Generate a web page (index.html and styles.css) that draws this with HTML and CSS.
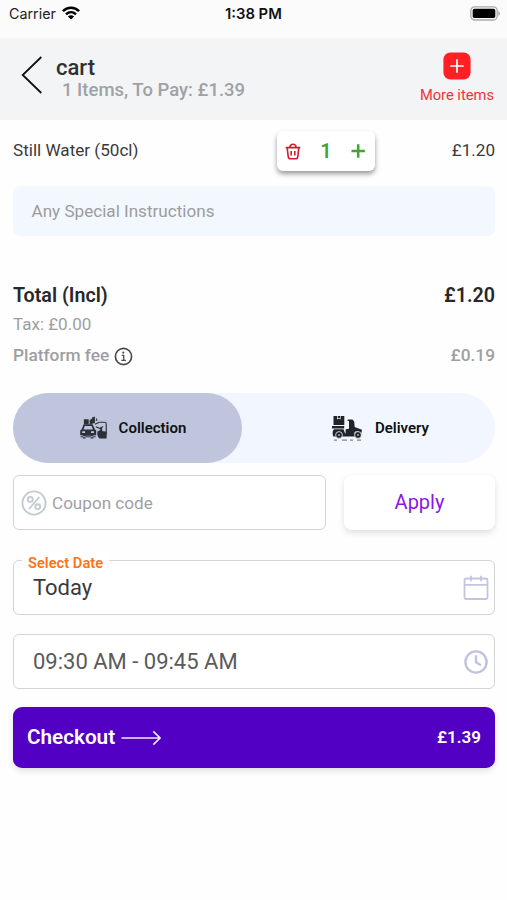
FILE: index.html
```html
<!DOCTYPE html>
<html lang="en">
<head>
<meta charset="utf-8">
<title>Cart</title>
<link rel="stylesheet" href="styles.css">
</head>
<body>
<div class="status">
  <div class="carrier"><span>Carrier</span>
    <svg width="18" height="14" viewBox="0 0 18 14" fill="none" stroke="#000" stroke-width="2.5"><path d="M.9 5.2C5.4.6 12.6.6 17.1 5.2M4 8.3c2.9-2.8 7.1-2.8 10 0"/><path d="M9 13.6 5.9 10.4c1.8-1.6 4.4-1.6 6.2 0z" fill="#000" stroke="none"/></svg>
  </div>
  <div class="time">1:38 PM</div>
  <svg class="battery" width="31" height="15" viewBox="0 0 31 15"><rect x=".8" y=".8" width="26.4" height="13.2" rx="4" fill="#fafafa" stroke="#aaa" stroke-width="1.3"/><rect x="2.7" y="2.7" width="22.6" height="9.4" rx="1.8"/><path d="M28.3 5c2.2.7 2.2 4.1 0 4.8z" fill="#aaa"/></svg>
</div>
<header class="header">
  <svg class="back" width="22" height="38" viewBox="0 0 22 38" fill="none" stroke="#111" stroke-width="1.8"><path d="M20.3 1 1.7 19l18.6 18"/></svg>
  <div class="titles"><h1>cart</h1><p>1 Items, To Pay: £1.39</p></div>
  <div class="more">
    <svg width="28" height="28" viewBox="0 0 28 28"><rect x=".4" y=".4" width="27.2" height="27.2" rx="7" fill="#ff2025"/><path d="M14 7.3v13.4M7.3 14h13.4" stroke="#fff" stroke-width="1.7"/></svg>
    <span>More items</span>
  </div>
</header>
<main>
  <div class="item">
    <span class="name">Still Water (50cl)</span>
    <div class="stepper">
      <svg width="16" height="17" viewBox="0 0 16 17" fill="none" stroke="#cc1f2d" stroke-width="1.6"><path d="M.7 4.6h14.6M2.2 4.8l1 8.8q.3 2.2 2.2 2.2h5.2q1.9 0 2.2-2.2l1-8.8M4.9 4.2C5.3.2 10.7.2 11.1 4.2M6.2 8v4.6M9.8 8v4.6"/></svg>
      <b>1</b>
      <svg width="15" height="14" viewBox="0 0 15 14" stroke="#42a234" stroke-width="2.5"><path d="M7.2.3v13.4M.5 7h13.4"/></svg>
    </div>
    <span class="price">£1.20</span>
  </div>
  <div class="note">Any Special Instructions</div>
  <div class="row total"><span>Total (Incl)</span><span>£1.20</span></div>
  <div class="tax">Tax: £0.00</div>
  <div class="row fee">
    <span class="fee-label"><span>Platform fee</span>
      <svg width="19" height="19" viewBox="0 0 19 19" fill="none" stroke="#4a4a4c"><circle cx="9.5" cy="9.5" r="8.1" stroke-width="1.7"/><path d="M7.7 8.4h2v5M7.3 13.4h4.6" stroke-width="1.3"/><circle cx="9.3" cy="5.6" r="1.1" fill="#4a4a4c" stroke="none"/></svg>
    </span><span>£0.19</span>
  </div>
  <div class="toggle">
    <div class="option selected">
      <svg width="27" height="24" viewBox="0 0 28 24" fill="#2c3039"><path d="M4 3h5v5H4zM10 4l3-2v6h-3zM12.5 1l3-1v7h-3z"/><path d="M3.8 8.2h9.3l2.3 5 1.4 1.4v5H14V23h-3v-3H5.8v3h-3v-3.4H.2v-5l1.5-1.4zM5 10l-1.4 3.6h9.8L12 10zM2.3 15.4v1.7h3v-1.7zm9.2 0v1.7h3v-1.7zM.6 20.6h15.7v1H.6z" fill-rule="evenodd"/><path d="M15.5 8.2 20 6h5.6q1.6 0 1.6 1.7V19M16.4 10.7l4.5 1.8 3-2.2" fill="none" stroke="#2c3039" stroke-width="1.2"/><path d="M18 15.7 21 14v-2.3q1-1.5 2 0v3.4l4.6.7V23h-7.4q-2.1-2-2.2-4zM16.8 1.4l1.5 3h-2z"/></svg>
      <span>Collection</span>
    </div>
    <div class="option delivery">
      <svg width="31" height="25" viewBox="0 0 31 25" fill="#202328"><path d="M1.5 0h10.8v9H1.5zM5 0v3.5l1.8-1 1.8 1V0H8v2.3l-1.2-.5-1.1.5V0z" fill-rule="evenodd"/><path d="M0 10h12.2v2.5H0zM2 13.3h9.5l1.6 4.2H24L28.4 14l1.6 2-4.5 4.5H1.3Q-.4 15.3 2 13.3z"/><path d="M15.7 3.4h4.7l1.8 2.2.5 5.4 7.2 2.7v1.2l-6.5.5-3.6 4.3h-6.2v-6.4l3.4-.5V5h-1.3z"/><circle cx="7" cy="19" r="3.4" stroke="#f2f7ff" stroke-width=".8"/><circle cx="26" cy="19" r="3.4" stroke="#f2f7ff" stroke-width=".8"/><circle cx="7" cy="19" r="1" fill="#aaa"/><circle cx="26" cy="19" r="1" fill="#aaa"/><path d="M2 24.1h3M10 24.1h5M18 24.1h3M25 24.1h4" stroke="#666" stroke-width="1"/></svg>
      <span>Delivery</span>
    </div>
  </div>
  <div class="coupon-row">
    <div class="coupon">
      <svg width="26" height="26" viewBox="0 0 26 26" fill="none" stroke="#c3cbd2" stroke-width="1.9"><circle cx="13" cy="13" r="11.6"/><path d="M18.3 7 8 19"/><circle cx="9.3" cy="9.4" r="2.5"/><circle cx="16.7" cy="16.7" r="2.5"/></svg>
      <span>Coupon code</span>
    </div>
    <div class="apply">Apply</div>
  </div>
  <div class="field date">
    <span class="legend">Select Date</span>
    <span class="value">Today</span>
    <svg width="26" height="25" viewBox="0 0 26 25" fill="none" stroke="#c3c5e0" stroke-width="1.8"><rect x="1.5" y="3.5" width="23" height="20.5" rx="1.5"/><path d="M1.5 9.8h23M8 .8v5.5M18 .8v5.5"/></svg>
  </div>
  <div class="field slot">
    <span class="value">09:30 AM - 09:45 AM</span>
    <svg width="26" height="26" viewBox="0 0 26 26" fill="none" stroke="#c0c2de" stroke-width="2.4"><circle cx="13" cy="13" r="10.6"/><path d="M13 6.2v7.2l5 2.8"/></svg>
  </div>
  <div class="checkout">
    <span class="label">Checkout</span>
    <svg width="40" height="16" viewBox="0 0 40 16" fill="none" stroke="#f1e8ff" stroke-width="1.6"><path d="M.5 8H39M32.3 1.4 39 8l-6.7 6.6"/></svg>
    <span class="sum">£1.39</span>
  </div>
</main>
</body>
</html>
```
FILE: styles.css
```css
* { box-sizing: border-box; }
body { margin: 0; width: 507px; height: 900px; background: #fefefe; font-family: Roboto, "Liberation Sans", sans-serif; color: #333; overflow: hidden; }
svg { display: block; flex: none; }
.status { height: 38px; padding: 0 6px 0 9px; background: #fbfbfb; display: grid; grid-template-columns: 216px 1fr auto; font: 14.3px/28px Inter, sans-serif; color: #222; }
.carrier { display: flex; gap: 6px; }
.carrier svg { margin-top: 6px; }
.time { font-size: 14.8px; font-weight: 600; color: #111; }
.battery { justify-self: end; margin-top: 6px; }
.header { height: 82px; background: #f3f4f6; padding: 0 13px 0 21px; display: flex; }
.back { margin-top: 18px; }
.titles { margin-left: 13px; padding-top: 17px; }
h1 { margin: 0; font-size: 22px; line-height: 26px; font-weight: 500; color: #303033; }
.titles p { margin: -2px 0 0 6px; font-size: 18.5px; line-height: 22px; font-weight: 500; color: #a0a1a5; }
.more { margin-left: auto; padding-top: 14px; display: flex; flex-direction: column; align-items: center; color: #f03238; font-size: 14.7px; line-height: 20px; }
.more span { margin-top: 5px; }
main { padding: 0 12px 0 13px; }
.item { height: 66px; padding-top: 11px; display: grid; grid-template-columns: 264px 98px 1fr; align-items: start; font-size: 17.1px; line-height: 38px; color: #3a3a3c; }
.stepper { height: 40px; padding: 0 9px 0 8px; display: flex; align-items: center; justify-content: space-between; background: #fff; border-radius: 6px; box-shadow: 0 3px 5px rgba(0,0,0,.4); }
.stepper b { font-size: 20px; font-weight: 600; color: #42a234; }
.price { justify-self: end; }
.note { height: 50px; border-radius: 7px; background: #f3f7fe; padding-left: 18.5px; font-size: 17.1px; line-height: 50px; color: #9b9da1; }
.row { display: flex; justify-content: space-between; align-items: center; }
.total { margin-top: 46px; height: 26px; font-size: 19.7px; font-weight: 600; color: #28282a; }
.tax { margin-top: 5px; height: 22px; font-size: 17px; line-height: 22px; color: #9d9ea3; }
.fee { margin-top: 8px; height: 24px; font-size: 17.3px; font-weight: 500; color: #9d9ea3; }
.fee-label { display: flex; align-items: center; gap: 5px; }
.fee-label svg { margin-top: 2px; }
.toggle { margin-top: 26px; height: 70px; border-radius: 35px; background: #f2f7ff; display: flex; color: #111; font-size: 15px; font-weight: 600; }
.option { flex: 1; display: flex; align-items: center; justify-content: center; gap: 12px; }
.option.selected { flex: 0 0 229px; padding-left: 11px; border-radius: 35px; background: #bfc5dc; }
.option.delivery { padding-left: 24px; }
.coupon-row { display: flex; gap: 18px; margin-top: 12px; height: 55px; }
.coupon { width: 313px; border: 1px solid #d4d4d6; border-radius: 6px; padding-left: 7px; display: flex; align-items: center; gap: 5px; font-size: 17.1px; color: #a0a0a4; background: #fff; }
.apply { flex: 1; border-radius: 8px; background: #fff; box-shadow: 0 3px 6px rgba(0,0,0,.12); text-align: center; font-size: 20px; line-height: 54px; color: #8a17e8; }
.field { position: relative; height: 55px; border: 1px solid #d4d4d6; border-radius: 6px; padding: 0 5px 0 19px; display: flex; align-items: center; justify-content: space-between; background: #fff; font-size: 22px; }
.date { margin-top: 30px; color: #3a3a3c; }
.slot { margin-top: 19px; color: #5a5a5c; }
.field .value { margin-top: -1px; }
.legend { position: absolute; left: 8px; top: -8px; padding: 0 6px; background: #fff; font-size: 14.7px; line-height: 20px; font-weight: 600; color: #fb7417; }
.checkout { margin-top: 18px; height: 61px; border-radius: 9px; background: #5200c4; box-shadow: 0 3px 6px rgba(0,0,0,.12); padding: 0 14px; display: flex; align-items: center; color: #fff; font-weight: 600; }
.label { font-size: 20.7px; margin: -2px 6px 0 0; }
.sum { margin: -2px 0 0 auto; font-size: 17px; }
```
